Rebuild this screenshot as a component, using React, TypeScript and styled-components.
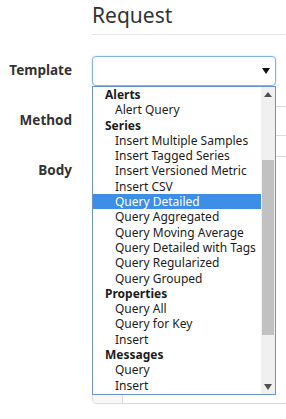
import React from "react";
import styled, { createGlobalStyle } from "styled-components";

const GlobalStyle = createGlobalStyle`
  html, body {
    margin: 0;
    overflow: hidden;
    background: #fff;
  }
  body {
    font-family: "Noto Sans", "Open Sans", sans-serif;
    color: #333;
  }
`;

const Page = styled.div`
  width: 286px;
  height: 419px;
  overflow: hidden;
`;

const Header = styled.h1`
  margin: 0 0 21px 92px;
  padding: 2px 0 6px;
  font-size: 21px;
  font-weight: 400;
  line-height: 26px;
  color: #333;
  border-bottom: 1px solid #e5e5e5;
`;

const Form = styled.div`
  display: grid;
  grid-template-columns: 72px 240px;
  column-gap: 20px;
  row-gap: 20px;
`;

const Label = styled.div`
  text-align: right;
  font-size: 13.5px;
  font-weight: 700;
  line-height: 28px;
  color: #333;
`;

const SelectWrap = styled.div`
  position: relative;
  z-index: 2;
`;

const SelectBox = styled.div`
  box-sizing: border-box;
  width: 184px;
  height: 30px;
  border: 1px solid #80b4e6;
  border-radius: 4px;
  box-shadow: 0 0 2px rgba(102, 175, 233, 0.45);
  display: flex;
  align-items: center;
  justify-content: flex-end;
  padding-right: 5px;
  background: #fff;
`;

const Caret = styled.span<{ $up?: boolean; $color?: string }>`
  width: 0;
  height: 0;
  border-left: 4px solid transparent;
  border-right: 4px solid transparent;
  ${(p) =>
    p.$up
      ? `border-bottom: 5px solid ${p.$color || "#111"};`
      : `border-top: 6px solid ${p.$color || "#111"};`}
`;

const Field = styled.div`
  box-sizing: border-box;
  height: 30px;
  border: 1px solid #dcdcdc;
  border-radius: 4px;
`;

const Editor = styled.div`
  box-sizing: border-box;
  height: 248px;
  border: 1px solid #dcdcdc;
  border-radius: 4px;
  display: flex;
  overflow: hidden;
`;

const Gutter = styled.div`
  width: 29px;
  background: #f7f7f7;
  border-right: 1px solid #dddddd;
`;

const Dropdown = styled.div`
  position: absolute;
  top: 30px;
  left: 0;
  box-sizing: border-box;
  width: 184px;
  height: 309px;
  border: 1px solid #6a94d0;
  background: #fff;
  display: flex;
`;

const Options = styled.div`
  flex: 1;
  overflow: hidden;
`;

const Row = styled.div<{ $group?: boolean; $selected?: boolean }>`
  height: 15.3px;
  line-height: 15.3px;
  overflow: hidden;
  font-size: 12px;
  white-space: nowrap;
  padding-left: ${(p) => (p.$group ? 12 : 22)}px;
  font-weight: ${(p) => (p.$group ? 700 : 400)};
  color: ${(p) => (p.$selected ? "#fff" : "#1c1c1c")};
  background: ${(p) => (p.$selected ? "#3c8ee6" : "transparent")};
`;

const Scrollbar = styled.div`
  width: 14px;
  background: #f0f0f0;
  display: flex;
  flex-direction: column;
`;

const ArrowButton = styled.div`
  height: 15px;
  display: flex;
  align-items: center;
  justify-content: center;
`;

const Track = styled.div`
  flex: 1;
`;

const Thumb = styled.div`
  margin: 58px 1px 0;
  height: 175px;
  background: #c1c1c1;
`;

type Item = { label: string; group?: boolean; selected?: boolean };

const items: Item[] = [
  { label: "Alerts", group: true },
  { label: "Alert Query" },
  { label: "Series", group: true },
  { label: "Insert Multiple Samples" },
  { label: "Insert Tagged Series" },
  { label: "Insert Versioned Metric" },
  { label: "Insert CSV" },
  { label: "Query Detailed", selected: true },
  { label: "Query Aggregated" },
  { label: "Query Moving Average" },
  { label: "Query Detailed with Tags" },
  { label: "Query Regularized" },
  { label: "Query Grouped" },
  { label: "Properties", group: true },
  { label: "Query All" },
  { label: "Query for Key" },
  { label: "Insert" },
  { label: "Messages", group: true },
  { label: "Query" },
  { label: "Insert" },
];

const App: React.FC = () => {
  return (
    <Page>
      <GlobalStyle />
      <Header>Request</Header>
      <Form>
        <Label>Template</Label>
        <SelectWrap>
          <SelectBox>
            <Caret />
          </SelectBox>
          <Dropdown>
            <Options>
              {items.map((item, i) => (
                <Row key={i} $group={item.group} $selected={item.selected}>
                  {item.label}
                </Row>
              ))}
            </Options>
            <Scrollbar>
              <ArrowButton>
                <Caret $up $color="#505050" />
              </ArrowButton>
              <Track>
                <Thumb />
              </Track>
              <ArrowButton>
                <Caret $color="#505050" />
              </ArrowButton>
            </Scrollbar>
          </Dropdown>
        </SelectWrap>

        <Label>Method</Label>
        <Field />

        <Label>Body</Label>
        <Editor>
          <Gutter />
        </Editor>
      </Form>
    </Page>
  );
};

export default App;
